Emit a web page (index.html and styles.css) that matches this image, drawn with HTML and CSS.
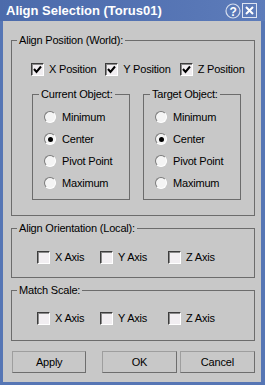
FILE: index.html
```html
<!DOCTYPE html>
<html lang="en">
<head>
    <meta charset="UTF-8">
    <title>Align Selection</title>
    <link rel="stylesheet" href="styles.css">
</head>
<body>
    <div class="window">
        <div class="titlebar">
            <span class="title">Align Selection (Torus01)</span>
            <span class="title-buttons">
                <svg class="help-btn" width="16" height="16" viewBox="0 0 16 16">
                    <circle cx="8" cy="8" r="7" fill="none" stroke="rgba(255,255,255,0.75)" stroke-width="1.2"/>
                    <text x="8" y="12.5" text-anchor="middle" class="help-glyph">?</text>
                </svg>
                <svg class="close-btn" width="15" height="15" viewBox="0 0 15 15">
                    <rect x="0.5" y="0.5" width="14" height="14" fill="none" stroke="rgba(255,255,255,0.8)" stroke-width="1"/>
                    <path d="M4 4 L11 11 M11 4 L4 11" stroke="#fff" stroke-width="2"/>
                </svg>
            </span>
        </div>

        <div class="content">
            <fieldset class="group group-position">
                <legend>Align Position (World):</legend>
                <div class="position-body">
                    <div class="axis-row position-axes">
                        <label class="check"><span class="box"><svg width="11" height="11" viewBox="0 0 11 11"><path d="M2 5 L4.5 8 L9 2.5" fill="none" stroke="#000" stroke-width="2"/></svg></span>X Position</label>
                        <label class="check"><span class="box"><svg width="11" height="11" viewBox="0 0 11 11"><path d="M2 5 L4.5 8 L9 2.5" fill="none" stroke="#000" stroke-width="2"/></svg></span>Y Position</label>
                        <label class="check"><span class="box"><svg width="11" height="11" viewBox="0 0 11 11"><path d="M2 5 L4.5 8 L9 2.5" fill="none" stroke="#000" stroke-width="2"/></svg></span>Z Position</label>
                    </div>
                    <div class="object-row">
                        <fieldset class="group sub">
                            <legend>Current Object:</legend>
                            <div class="radio-list">
                                <label class="radio"><span class="dot"></span>Minimum</label>
                                <label class="radio"><span class="dot on"></span>Center</label>
                                <label class="radio"><span class="dot"></span>Pivot Point</label>
                                <label class="radio"><span class="dot"></span>Maximum</label>
                            </div>
                        </fieldset>
                        <fieldset class="group sub">
                            <legend>Target Object:</legend>
                            <div class="radio-list">
                                <label class="radio"><span class="dot"></span>Minimum</label>
                                <label class="radio"><span class="dot on"></span>Center</label>
                                <label class="radio"><span class="dot"></span>Pivot Point</label>
                                <label class="radio"><span class="dot"></span>Maximum</label>
                            </div>
                        </fieldset>
                    </div>
                </div>
            </fieldset>

            <fieldset class="group group-axes">
                <legend>Align Orientation (Local):</legend>
                <div class="axis-row small-axes">
                    <label class="check"><span class="box"></span>X Axis</label>
                    <label class="check"><span class="box"></span>Y Axis</label>
                    <label class="check"><span class="box"></span>Z Axis</label>
                </div>
            </fieldset>

            <fieldset class="group group-axes">
                <legend>Match Scale:</legend>
                <div class="axis-row small-axes scale-axes">
                    <label class="check"><span class="box"></span>X Axis</label>
                    <label class="check"><span class="box"></span>Y Axis</label>
                    <label class="check"><span class="box"></span>Z Axis</label>
                </div>
            </fieldset>

            <div class="buttons">
                <button class="btn btn-apply">Apply</button>
                <button class="btn btn-ok">OK</button>
                <button class="btn btn-cancel">Cancel</button>
            </div>
        </div>
    </div>
</body>
</html>
```

FILE: styles.css
```css
body {
    margin: 0;
    padding: 0;
    font-family: "Liberation Sans", Arial, sans-serif;
    font-size: 11px;
    letter-spacing: -0.2px;
    color: #000;
}

.window {
    width: 265px;
    height: 385px;
    box-sizing: border-box;
    background-color: #5676b5;
    padding: 0 4px 3px 3px;
    display: flex;
    flex-direction: column;
}

.titlebar {
    height: 21px;
    margin: 0 -4px 0 -3px;
    padding: 0 6px;
    display: flex;
    align-items: center;
    justify-content: space-between;
    background: linear-gradient(90deg, #4c6bab 0%, #5473b3 55%, #5d7cba 100%);
}

.title {
    font-size: 13px;
    font-weight: bold;
    letter-spacing: 0;
    line-height: 21px;
    color: #fff;
}

.title-buttons {
    display: flex;
    align-items: center;
    gap: 1px;
    margin-right: 2px;
}

.help-glyph {
    font-family: "Liberation Sans", Arial, sans-serif;
    font-size: 12px;
    font-weight: bold;
    fill: #fff;
}

.content {
    flex: 1;
    background-color: #c8c8c8;
    padding: 13px 6px 0 8px;
}

.group {
    margin: 0;
    padding: 0;
    border: 1px solid #6c6c6c;
    min-width: 0;
}

.group legend {
    margin-left: 5px;
    padding: 0 2px;
    line-height: 13px;
}

.group-position .position-body {
    padding: 16px 0 15px 19px;
}

.axis-row {
    display: flex;
    height: 13px;
    align-items: center;
}

.check {
    display: flex;
    align-items: center;
    gap: 5px;
    line-height: 13px;
}

.position-axes .check {
    width: 75px;
}

.box {
    width: 13px;
    height: 13px;
    box-sizing: border-box;
    border: 1px solid;
    border-color: #3c3c3c #ffffff #ffffff #3c3c3c;
    box-shadow: inset 1px 1px 0 #8a8a8a;
    background-color: #f1eef1;
    display: flex;
    align-items: center;
    justify-content: center;
}

.box svg {
    display: block;
}

.object-row {
    display: flex;
    gap: 13px;
    margin-top: 12px;
    padding-left: 1px;
}

.sub {
    width: 98px;
    box-sizing: border-box;
}

.sub legend {
    margin-left: 6px;
}

.radio-list {
    padding: 5px 0 5px 0;
}

.radio {
    height: 22px;
    display: flex;
    align-items: center;
    gap: 6px;
    padding-left: 11px;
}

.dot {
    width: 12px;
    height: 12px;
    box-sizing: border-box;
    border-radius: 50%;
    border: 1px solid;
    border-color: #7a7a7a #ffffff #ffffff #7a7a7a;
    background-color: #f4f4f4;
    display: flex;
    align-items: center;
    justify-content: center;
}

.dot.on::after {
    content: "";
    width: 5px;
    height: 5px;
    border-radius: 50%;
    background-color: #000;
}

.group-axes {
    margin-top: 6px;
}

.small-axes {
    padding: 16px 0 13px 25px;
}

.scale-axes {
    padding-top: 15px;
    padding-bottom: 15px;
}

.small-axes .check:nth-child(1) {
    width: 63px;
}

.small-axes .check:nth-child(2) {
    width: 68px;
}

.buttons {
    display: flex;
    margin-top: 10px;
    padding-left: 1px;
}

.btn {
    height: 22px;
    width: 75px;
    margin: 0;
    padding: 0;
    font-family: "Liberation Sans", Arial, sans-serif;
    font-size: 11px;
    letter-spacing: -0.2px;
    color: #000;
    background-color: #c8c8c8;
    border: 1px solid;
    border-color: #9e9e9e #6e6e6e #6e6e6e #9e9e9e;
    border-radius: 0;
}

.btn-ok {
    margin-left: 16px;
}

.btn-cancel {
    margin-left: 3px;
    width: 76px;
}
```
